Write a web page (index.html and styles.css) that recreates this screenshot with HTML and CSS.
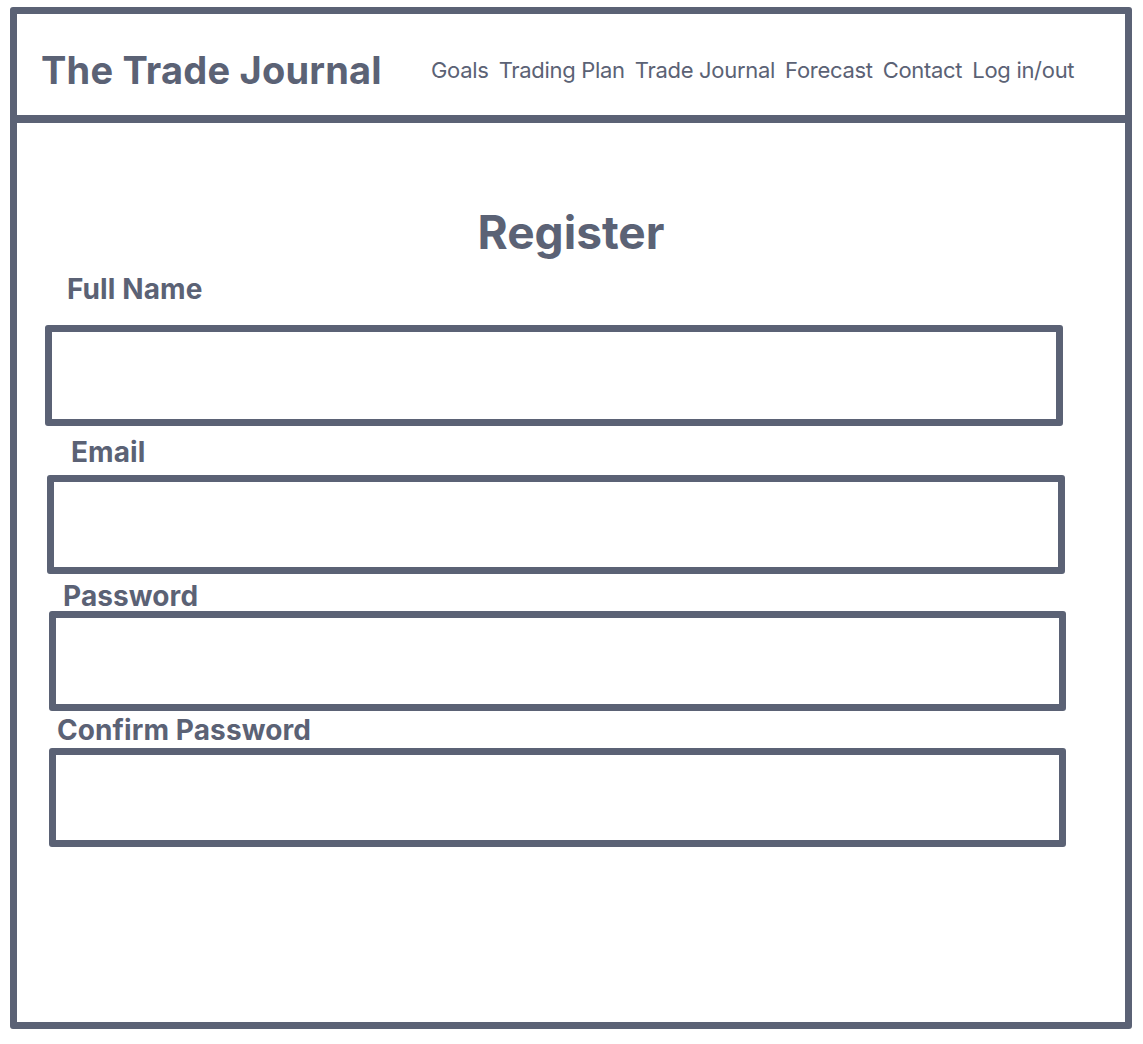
FILE: index.html
```html
<!DOCTYPE html>
<html>
<head>
    <title>Register - The Trade Journal</title>
    <link rel="stylesheet" href="styles.css">
</head>
<body>
    <div class="frame">
        <header class="topbar">
            <div class="brand">The Trade Journal</div>
            <nav class="nav">
                <a href="#">Goals</a>
                <a href="#">Trading Plan</a>
                <a href="#">Trade Journal</a>
                <a href="#">Forecast</a>
                <a href="#">Contact</a>
                <a href="#">Log in/out</a>
            </nav>
        </header>

        <main class="register">
            <h1>Register</h1>

            <div class="field field-name">
                <label for="fullname">Full Name</label>
                <input type="text" id="fullname">
            </div>
            <div class="field field-email">
                <label for="email">Email</label>
                <input type="email" id="email">
            </div>
            <div class="field field-password">
                <label for="password">Password</label>
                <input type="password" id="password">
            </div>
            <div class="field field-confirm">
                <label for="confirm">Confirm Password</label>
                <input type="password" id="confirm">
            </div>
        </main>
    </div>
</body>
</html>
```

FILE: styles.css
```css
body {
    margin: 0;
    background-color: #fff;
    color: #5b6275;
    font-family: Inter, "Noto Sans", sans-serif;
}

.frame {
    box-sizing: border-box;
    width: 1122px;
    height: 1022px;
    margin: 7px 0 0 10px;
    border: 7px solid #5b6275;
    border-radius: 3px;
}

.topbar {
    display: flex;
    align-items: center;
    height: 91px;
    padding: 10px 0 0 24px;
    border-bottom: 8px solid #5b6275;
}

.brand {
    font-size: 38px;
    font-weight: 700;
    letter-spacing: 0.2px;
    width: 390px;
}

.nav {
    display: flex;
    gap: 10px;
}

.nav a {
    color: #5b6275;
    text-decoration: none;
    font-size: 22px;
    letter-spacing: -0.3px;
}

.register {
    padding-top: 86px;
}

.register h1 {
    margin: 0;
    font-size: 46px;
    line-height: 46px;
    font-weight: 700;
    text-align: center;
}

.field label {
    display: block;
    font-size: 28px;
    line-height: 26px;
    font-weight: 700;
    letter-spacing: 0.1px;
}

.field input {
    display: block;
    box-sizing: border-box;
    width: 1018px;
    height: 101px;
    border: 7px solid #5b6275;
    border-radius: 3px;
    background: #fff;
    outline: none;
}

.field-name {
    margin-top: 21px;
}

.field-name label {
    padding-left: 50px;
}

.field-name input {
    margin: 23px 0 0 28px;
}

.field-email {
    margin-top: 13px;
}

.field-email label {
    padding-left: 54px;
}

.field-email input {
    height: 99px;
    margin: 10px 0 0 30px;
}

.field-password {
    margin-top: 9px;
}

.field-password label {
    padding-left: 46px;
}

.field-password input {
    width: 1017px;
    height: 100px;
    margin: 2px 0 0 32px;
}

.field-confirm {
    margin-top: 6px;
}

.field-confirm label {
    padding-left: 40px;
}

.field-confirm input {
    width: 1017px;
    height: 99px;
    margin: 5px 0 0 32px;
}
```
